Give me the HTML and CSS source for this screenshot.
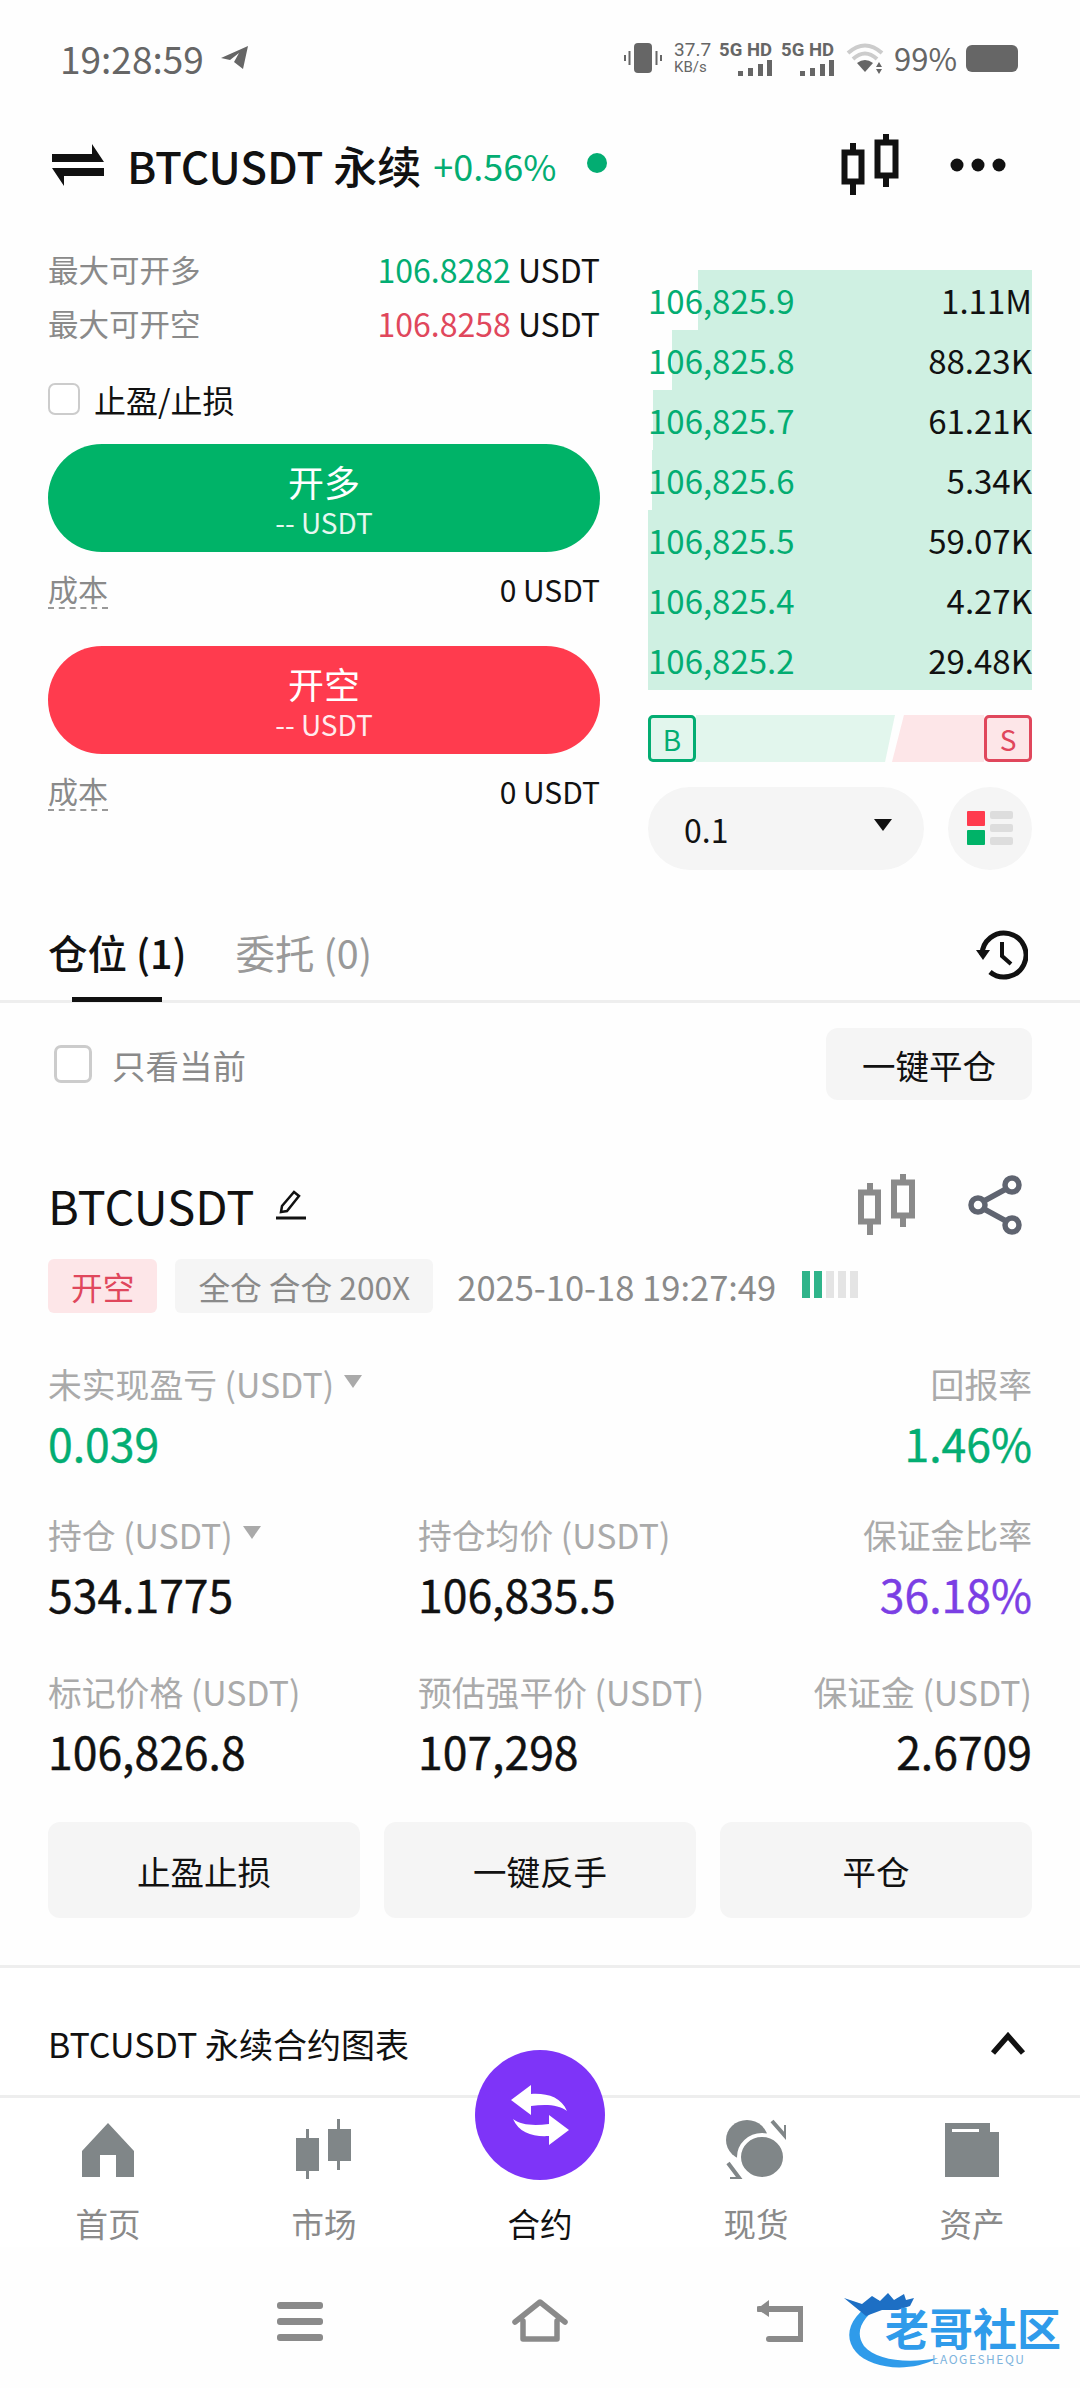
FILE: index.html
```html
<!DOCTYPE html>
<html lang="zh">
<head>
  <meta charset="UTF-8">
  <title>BTCUSDT 永续</title>
  <link rel="stylesheet" href="styles.css">
</head>
<body>
  <div class="phone">
    <div class="status">
      <div class="status-left">
        <span class="clock">19:28:59</span>
        <svg class="send" width="30" height="26" viewBox="0 0 30 26"><path d="M29 1 L2 13 L11 15 L20 8 L15 17 L24 24 Z" fill="#666"/></svg>
      </div>
      <div class="status-right">
        <svg width="38" height="32" viewBox="0 0 38 32"><rect x="10" y="1" width="18" height="30" rx="4" fill="#666"/><path d="M5.500 9v14M1 13v6M32.500 9v14M37 13v6" stroke="#666" stroke-width="2"/></svg>
        <div class="speed"><span>37.7</span><span class="speed-unit">KB/s</span></div>
        <div class="net"><span>5G HD</span>
          <svg width="36" height="16" viewBox="0 0 36 16"><path d="M2 11h5v5H2zM12 8h5v8h-5zM22 4h5v12h-5zM31 0h5v16h-5z" fill="#666"/></svg>
        </div>
        <div class="net"><span>5G HD</span>
          <svg width="36" height="16" viewBox="0 0 36 16"><path d="M2 11h5v5H2zM12 8h5v8h-5zM22 4h5v12h-5zM31 0h5v16h-5z" fill="#666"/></svg>
        </div>
        <svg class="wifi" width="38" height="32" viewBox="0 0 38 32"><path d="M2 11 Q19 -4 36 11" fill="none" stroke="#ccc" stroke-width="4"/><path d="M7 17 Q19 6 31 17" fill="none" stroke="#ccc" stroke-width="4"/><path d="M11 21 Q19 15 27 21 L19 30 Z" fill="#666"/><path d="M33 20l3 5h-6zM33 32l3-5h-6z" fill="#666"/></svg>
        <span class="batt-text">99%</span>
        <div class="batt"></div>
      </div>
    </div>

    <div class="head">
      <svg class="swap" width="52" height="42" viewBox="0 0 52 42"><path d="M0 10h40V0l12 18H0zM52 32H12v10L0 24h52z" fill="#111"/></svg>
      <span class="pair">BTCUSDT 永续</span>
      <span class="change">+0.56%</span>
      <span class="live-dot"></span>
      <svg class="head-candle" width="58" height="62" viewBox="0 0 58 62"><g fill="none" stroke="#111" stroke-width="6"><rect x="3.500" y="18.500" width="17" height="29"/><path d="M12 9v9M12 48v13"/><rect x="36.500" y="8.500" width="18" height="33"/><path d="M45 0v8M45 42v11"/></g></svg>
      <svg class="head-more" width="56" height="14" viewBox="0 0 56 14"><circle cx="7" cy="7" r="6.500" fill="#111"/><circle cx="28" cy="7" r="6.500" fill="#111"/><circle cx="49" cy="7" r="6.500" fill="#111"/></svg>
    </div>

    <div class="trade">
      <div class="order">
        <div class="max-row"><span class="muted">最大可开多</span><span class="max-value"><span class="up">106.8282</span> USDT</span></div>
        <div class="max-row"><span class="muted">最大可开空</span><span class="max-value"><span class="down">106.8258</span> USDT</span></div>
        <div class="tp-row"><span class="check"></span><span>止盈/止损</span></div>
        <div class="big-btn btn-long"><span class="big-title">开多</span><span class="big-sub">-- USDT</span></div>
        <div class="cost-row"><span class="cost-label">成本</span><span>0 USDT</span></div>
        <div class="big-btn btn-short"><span class="big-title">开空</span><span class="big-sub">-- USDT</span></div>
        <div class="cost-row"><span class="cost-label">成本</span><span>0 USDT</span></div>
      </div>

      <div class="book">
        <div class="book-row"><i class="depth" style="width: 87%"></i><span class="up">106,825.9</span><span>1.11M</span></div>
        <div class="book-row"><i class="depth" style="width: 93.8%"></i><span class="up">106,825.8</span><span>88.23K</span></div>
        <div class="book-row"><i class="depth" style="width: 98.7%"></i><span class="up">106,825.7</span><span>61.21K</span></div>
        <div class="book-row"><i class="depth" style="width: 99%"></i><span class="up">106,825.6</span><span>5.34K</span></div>
        <div class="book-row"><i class="depth" style="width: 100%"></i><span class="up">106,825.5</span><span>59.07K</span></div>
        <div class="book-row"><i class="depth" style="width: 100%"></i><span class="up">106,825.4</span><span>4.27K</span></div>
        <div class="book-row"><i class="depth" style="width: 100%"></i><span class="up">106,825.2</span><span>29.48K</span></div>

        <div class="ratio">
          <span class="ratio-box box-b">B</span>
          <span class="ratio-buy"></span>
          <span class="ratio-sell"></span>
          <span class="ratio-box box-s">S</span>
        </div>

        <div class="depth-tools">
          <div class="step"><span>0.1</span><span class="step-caret"></span></div>
          <div class="layout-btn">
            <svg width="46" height="36" viewBox="0 0 46 36"><rect x="0" y="0" width="18" height="15" rx="1" fill="#ff3b4e"/><rect x="0" y="19" width="18" height="15" rx="1" fill="#00b368"/><g fill="#ddd"><rect x="23" y="0" width="23" height="8" rx="2"/><rect x="23" y="13" width="23" height="8" rx="2"/><rect x="23" y="26" width="23" height="8" rx="2"/></g></svg>
          </div>
        </div>
      </div>
    </div>

    <div class="tabs">
      <div class="tab tab-on"><span>仓位 (1)</span><i class="tab-line"></i></div>
      <div class="tab"><span>委托 (0)</span></div>
      <svg class="history" width="52" height="50" viewBox="0 0 52 50"><path d="M6 25 A22 22 0 1 1 14 42" fill="none" stroke="#111" stroke-width="5"/><path d="M0 20h14L7 30z" fill="#111"/><path d="M26 12v14l9 8" fill="none" stroke="#111" stroke-width="4"/></svg>
    </div>

    <div class="filter">
      <div class="filter-left"><span class="check check-big"></span><span class="muted">只看当前</span></div>
      <div class="close-all">一键平仓</div>
    </div>

    <div class="pos-head">
      <span class="pos-name">BTCUSDT</span>
      <svg class="pencil" width="30" height="30" viewBox="0 0 30 30"><path d="M18 2l5 4-12 15-6 1 1-6z" fill="none" stroke="#111" stroke-width="2.500"/><path d="M0 28h30" stroke="#111" stroke-width="3"/></svg>
      <svg class="pos-candle" width="58" height="62" viewBox="0 0 58 62"><g fill="none" stroke="#8a8a8a" stroke-width="6"><rect x="3" y="18.500" width="17" height="29"/><path d="M12 9v9M12 48v13"/><rect x="36" y="8.500" width="18" height="33"/><path d="M45 0v8M45 42v11"/></g></svg>
      <svg class="share" width="54" height="60" viewBox="0 0 54 60"><g fill="none" stroke="#5f6470" stroke-width="5.500"><circle cx="44" cy="10" r="7"/><circle cx="10" cy="30" r="7"/><circle cx="44" cy="50" r="7"/><path d="M16 26 38 14M16 34 38 46"/></g></svg>
    </div>

    <div class="tags">
      <span class="tag tag-short">开空</span>
      <span class="tag">全仓 合仓 200X</span>
      <span class="pos-time">2025-10-18 19:27:49</span>
      <span class="lever"><i class="lever-on"></i><i class="lever-on"></i><i></i><i></i><i></i></span>
    </div>

    <div class="stats">
      <div class="stat"><div class="stat-label">未实现盈亏 (USDT)<i class="caret"></i></div><div class="stat-value up">0.039</div></div>
      <div class="stat"></div>
      <div class="stat stat-end"><div class="stat-label">回报率</div><div class="stat-value up">1.46%</div></div>

      <div class="stat"><div class="stat-label">持仓 (USDT)<i class="caret"></i></div><div class="stat-value">534.1775</div></div>
      <div class="stat"><div class="stat-label">持仓均价 (USDT)</div><div class="stat-value">106,835.5</div></div>
      <div class="stat stat-end"><div class="stat-label">保证金比率</div><div class="stat-value purple">36.18%</div></div>

      <div class="stat"><div class="stat-label">标记价格 (USDT)</div><div class="stat-value">106,826.8</div></div>
      <div class="stat"><div class="stat-label">预估强平价 (USDT)</div><div class="stat-value">107,298</div></div>
      <div class="stat stat-end"><div class="stat-label">保证金 (USDT)</div><div class="stat-value">2.6709</div></div>
    </div>

    <div class="actions">
      <div class="action">止盈止损</div>
      <div class="action">一键反手</div>
      <div class="action">平仓</div>
    </div>

    <div class="chart-bar">
      <span>BTCUSDT 永续合约图表</span>
      <svg width="36" height="24" viewBox="0 0 36 24"><path d="M3 21 18 4l15 17" fill="none" stroke="#111" stroke-width="5.500"/></svg>
    </div>

    <div class="tabbar">
      <div class="tabbar-item">
        <svg width="52" height="60" viewBox="0 0 52 60"><path d="M26 4 52 32V58H34V36H18V58H0V32Z" fill="#808688"/></svg>
        <span>首页</span>
      </div>
      <div class="tabbar-item">
        <svg width="56" height="60" viewBox="0 0 56 60"><path d="M10 10h3v9h10v33H13v8h-3v-8H0V19h10zM41 0h3v10h11v32H44v9h-3v-9H32V10h9z" fill="#808688"/></svg>
        <span>市场</span>
      </div>
      <div class="tabbar-item tabbar-on">
        <span class="fab-slot"></span>
        <span>合约</span>
      </div>
      <div class="tabbar-item">
        <svg width="60" height="60" viewBox="0 0 60 60"><ellipse cx="21" cy="21" rx="21" ry="20" fill="#808688"/><ellipse cx="36" cy="38" rx="23" ry="22" fill="#808688" stroke="#fff" stroke-width="4"/><path d="M46 2 60 18V6M2 44 14 60H4" fill="none" stroke="#808688" stroke-width="4"/></svg>
        <span>现货</span>
      </div>
      <div class="tabbar-item">
        <svg width="54" height="60" viewBox="0 0 54 60"><path d="M0 4H45V13H54V58H0Z" fill="#808688"/><rect x="7" y="10" width="27" height="3" fill="#fff"/></svg>
        <span>资产</span>
      </div>
    </div>

    <div class="fab">
      <svg width="58" height="60" viewBox="0 0 58 60"><path d="M20 0 0 15 20 30V21C36 19 48 20 56 26 50 12 36 8 20 9ZM38 30 58 45 38 60V51C22 52 8 48 2 34 10 40 22 41 38 39Z" fill="#fff"/></svg>
    </div>

    <div class="sysnav">
      <svg width="46" height="43" viewBox="0 0 46 43"><g fill="#8a8a8a"><rect x="0" y="3" width="46" height="7" rx="3"/><rect x="0" y="19" width="46" height="7" rx="3"/><rect x="0" y="35" width="46" height="7" rx="3"/></g></svg>
      <svg width="56" height="43" viewBox="0 0 56 43"><path d="M3 23 28 3l25 20M11 22v18h34V22" fill="none" stroke="#8a8a8a" stroke-width="5.500" stroke-linejoin="round" stroke-linecap="round"/></svg>
      <svg width="46" height="43" viewBox="0 0 46 43"><path d="M2 10h42v30H12" fill="none" stroke="#8a8a8a" stroke-width="6" stroke-linecap="round"/><path d="M0 10 12 1v17z" fill="#8a8a8a"/></svg>
    </div>

    <div class="mark">
      <svg class="mark-swoosh" width="110" height="80" viewBox="0 0 110 80"><path d="M36 8C8 22 0 44 14 60 28 76 66 82 96 66 64 72 34 68 22 54 12 40 20 24 42 12Z" fill="#2f9bea"/><path d="M2 6 20 12 30 4 38 9 46 1 52 8 62 2 64 8 72 6 68 14 56 18 40 18 24 24Z" fill="#1d6fc4"/></svg>
      <span class="mark-name">老哥社区</span>
      <span class="mark-sub">LAOGESHEQU</span>
    </div>
  </div>
</body>
</html>
```

FILE: styles.css
```css
* {
  box-sizing: border-box;
}

html,
body {
  margin: 0;
  padding: 0;
}

body {
  background: #ffffff;
  color: #111111;
  font-family: "Noto Sans CJK SC", "Noto Sans", sans-serif;
}

i {
  font-style: normal;
}

.phone {
  position: relative;
  width: 1080px;
  height: 2388px;
  overflow: hidden;
  background: #fefefe;
}

.up {
  color: #03ad72;
}

.down {
  color: #e0475c;
}

.purple {
  color: #7b3fe4;
}

.muted {
  color: #8a8a8a;
}

/* status bar */
.status {
  display: flex;
  align-items: center;
  justify-content: space-between;
  height: 116px;
  padding: 0 62px 0 60px;
  color: #666666;
}

.status-left {
  display: flex;
  align-items: center;
}

.clock {
  font-size: 37px;
  line-height: 44px;
}

.send {
  margin-left: 15px;
}

.status-right {
  display: flex;
  align-items: center;
}

.speed {
  display: flex;
  flex-direction: column;
  width: 36px;
  margin-left: 12px;
  font-family: "Roboto", sans-serif;
  font-size: 19px;
  line-height: 19px;
}

.speed-unit {
  font-size: 15px;
  line-height: 17px;
}

.net {
  display: flex;
  flex-direction: column;
  align-items: flex-end;
  width: 50px;
  margin-left: 12px;
  font-family: "Roboto", sans-serif;
  font-size: 18.500px;
  font-weight: 700;
  line-height: 20px;
  white-space: nowrap;
}

.wifi {
  margin-left: 12px;
}

.batt-text {
  margin-left: 10px;
  font-size: 31px;
  line-height: 40px;
}

.batt {
  width: 52px;
  height: 27px;
  margin-left: 9px;
  background: #666666;
  border-radius: 6px;
}

/* top title */
.head {
  display: flex;
  align-items: center;
  height: 98px;
  padding-left: 52px;
}

.pair {
  margin-left: 23px;
  font-size: 44px;
  font-weight: 500;
  line-height: 60px;
  white-space: nowrap;
}

.change {
  margin-left: 12px;
  color: #03ad72;
  font-size: 36px;
  line-height: 60px;
}

.live-dot {
  width: 20px;
  height: 20px;
  margin-left: 31px;
  margin-top: -4px;
  background: #03ad72;
  border-radius: 50%;
}

.head-candle {
  margin-left: 234px;
}

.head-more {
  margin-left: 51px;
}

/* order form + order book */
.trade {
  display: flex;
  gap: 48px;
  height: 686px;
  padding: 0 48px;
}

.order {
  width: 552px;
  padding-top: 28px;
}

.max-row {
  display: flex;
  align-items: center;
  justify-content: space-between;
  height: 54px;
  font-size: 30.500px;
}

.max-value {
  font-size: 32px;
}

.tp-row {
  display: flex;
  align-items: center;
  gap: 14px;
  height: 54px;
  margin-top: 22px;
  font-size: 32px;
}

.check {
  display: block;
  width: 32px;
  height: 32px;
  background: #ffffff;
  border: 2px solid #cccccc;
  border-radius: 7px;
}

.check-big {
  width: 38px;
  height: 38px;
  border-width: 3px;
}

.big-btn {
  display: flex;
  flex-direction: column;
  align-items: center;
  height: 108px;
  padding-top: 13px;
  color: #ffffff;
  border-radius: 54px;
}

.tp-row + .big-btn {
  margin-top: 18px;
}

.btn-long {
  background: #00b368;
}

.btn-short {
  margin-top: 16px;
  background: #ff3b4e;
}

.big-title {
  font-size: 36px;
  line-height: 48px;
}

.big-sub {
  font-size: 28px;
  line-height: 34px;
  opacity: 0.9;
}

.cost-row {
  display: flex;
  align-items: center;
  justify-content: space-between;
  height: 78px;
  padding-bottom: 5px;
  font-size: 30px;
}

.cost-label {
  color: #8a8a8a;
  line-height: 38px;
  border-bottom: 2px dashed #999999;
}

.book {
  width: 384px;
  padding-top: 56px;
}

.book-row {
  position: relative;
  display: flex;
  align-items: center;
  justify-content: space-between;
  height: 60px;
  font-size: 33px;
}

.book-row span {
  position: relative;
}

.depth {
  position: absolute;
  top: 0;
  right: 0;
  bottom: 0;
  background: #cff0e2;
}

.ratio {
  display: flex;
  height: 47px;
  margin-top: 25px;
}

.ratio-box {
  display: flex;
  align-items: center;
  justify-content: center;
  width: 48px;
  font-size: 28px;
  border: 3px solid;
  border-radius: 5px;
}

.box-b {
  color: #03ad72;
  background: #e2f6ed;
}

.box-s {
  color: #e0475c;
  background: #fde6e8;
}

.ratio-buy {
  width: 199px;
  background: #e2f6ed;
  clip-path: polygon(0 0, 100% 0, 95% 100%, 0 100%);
}

.ratio-sell {
  flex: 1;
  margin-left: -3px;
  background: #fde6e8;
  clip-path: polygon(13% 0, 100% 0, 100% 100%, 0 100%);
}

.depth-tools {
  display: flex;
  justify-content: space-between;
  height: 83px;
  margin-top: 25px;
}

.step {
  display: flex;
  align-items: center;
  justify-content: space-between;
  width: 276px;
  padding: 0 32px 0 36px;
  font-size: 32px;
  background: #f5f5f5;
  border-radius: 42px;
}

.step-caret {
  width: 0;
  height: 0;
  margin-top: -8px;
  border-top: 12px solid #111111;
  border-left: 9px solid transparent;
  border-right: 9px solid transparent;
}

.layout-btn {
  display: flex;
  align-items: center;
  justify-content: center;
  width: 84px;
  background: #f5f5f5;
  border-radius: 50%;
}

/* tabs */
.tabs {
  display: flex;
  align-items: flex-start;
  height: 103px;
  padding: 27px 50px 0 48px;
  border-bottom: 3px solid #eeeeee;
}

.tab {
  display: flex;
  flex-direction: column;
  align-items: center;
  margin-right: 49px;
  color: #999999;
  font-size: 39.500px;
  line-height: 50px;
}

.tab-on {
  color: #111111;
  font-weight: 500;
}

.tab-line {
  display: block;
  width: 90px;
  height: 5px;
  margin-top: 20px;
  background: #111111;
}

.history {
  margin: 3px 2px 0 auto;
}

.filter {
  display: flex;
  align-items: center;
  justify-content: space-between;
  height: 122px;
  padding: 0 48px 0 54px;
  font-size: 33.500px;
}

.filter-left {
  display: flex;
  align-items: center;
  gap: 20px;
}

.close-all {
  display: flex;
  align-items: center;
  justify-content: center;
  width: 206px;
  height: 72px;
  background: #f5f5f5;
  border-radius: 12px;
}

/* position card */
.pos-head {
  display: flex;
  align-items: center;
  height: 62px;
  margin-top: 49px;
  padding: 0 58px 0 48px;
}

.pos-name {
  font-size: 47px;
  line-height: 62px;
}

.pencil {
  margin-left: 22px;
}

.pos-candle {
  margin-left: auto;
}

.share {
  margin-left: 52px;
}

.tags {
  display: flex;
  align-items: center;
  height: 54px;
  margin-top: 23px;
  padding-left: 48px;
}

.tag {
  display: flex;
  align-items: center;
  height: 54px;
  margin-right: 18px;
  padding: 0 23px;
  color: #8a8a8a;
  font-size: 31.700px;
  background: #f5f5f5;
  border-radius: 6px;
}

.tag-short {
  color: #e0475c;
  background: #fde6e8;
}

.pos-time {
  margin-left: 6px;
  color: #8a8a8a;
  font-size: 34.500px;
}

.lever {
  display: flex;
  gap: 4px;
  height: 27px;
  margin: -4px 0 0 26px;
}

.lever i {
  width: 8px;
  background: #e4e4e4;
}

.lever .lever-on {
  background: #2fb48a;
}

.stats {
  display: grid;
  grid-template-columns: 370px 1fr 1fr;
  grid-template-rows: 151px 157px auto;
  margin-top: 48px;
  padding: 0 48px;
}

.stat-end {
  text-align: right;
}

.stat-label {
  color: #aaaaaa;
  font-size: 33.800px;
  line-height: 46px;
  white-space: nowrap;
}

.stat-value {
  margin-top: 6px;
  font-size: 44.500px;
  line-height: 60px;
  white-space: nowrap;
  -webkit-text-stroke: 0.4px currentColor;
}

.caret {
  display: inline-block;
  margin-left: 10px;
  vertical-align: 10px;
  border-top: 13px solid #aaaaaa;
  border-left: 9px solid transparent;
  border-right: 9px solid transparent;
}

.actions {
  display: flex;
  gap: 24px;
  margin-top: 41px;
  padding: 0 48px;
}

.action {
  display: flex;
  flex: 1;
  align-items: center;
  justify-content: center;
  height: 96px;
  font-size: 33.500px;
  background: #f5f5f5;
  border-radius: 12px;
}

.chart-bar {
  display: flex;
  align-items: center;
  justify-content: space-between;
  height: 133px;
  margin-top: 47px;
  padding: 24px 54px 0 48px;
  font-size: 34px;
  background: #ffffff;
  border-top: 3px solid #eeeeee;
  border-bottom: 3px solid #eeeeee;
}

/* bottom tabs */
.tabbar {
  display: flex;
  height: 149px;
  padding-top: 21px;
  background: #ffffff;
}

.tabbar-item {
  display: flex;
  flex: 1;
  flex-direction: column;
  align-items: center;
  gap: 22px;
  color: #8a8a8a;
  font-size: 32.500px;
  line-height: 44px;
}

.tabbar-on {
  color: #111111;
}

.fab-slot {
  height: 60px;
}

.fab {
  position: absolute;
  top: 2050px;
  left: 475px;
  display: flex;
  align-items: center;
  justify-content: center;
  width: 130px;
  height: 130px;
  background: #7e34f8;
  border-radius: 50%;
}

.sysnav {
  display: flex;
  justify-content: space-between;
  padding: 52px 277px 0;
}

/* watermark over the nav bar */
.mark {
  position: absolute;
  top: 2292px;
  left: 840px;
  width: 226px;
  height: 84px;
}

.mark-swoosh {
  position: absolute;
  top: 0;
  left: 2px;
}

.mark-name {
  position: absolute;
  top: 7px;
  left: 45px;
  color: #2f9bea;
  font-size: 44px;
  font-weight: 700;
  line-height: 56px;
  white-space: nowrap;
}

.mark-sub {
  position: absolute;
  top: 60px;
  left: 92px;
  color: #7fb4dd;
  font-size: 12px;
  line-height: 14px;
  letter-spacing: 1.500px;
}
```
